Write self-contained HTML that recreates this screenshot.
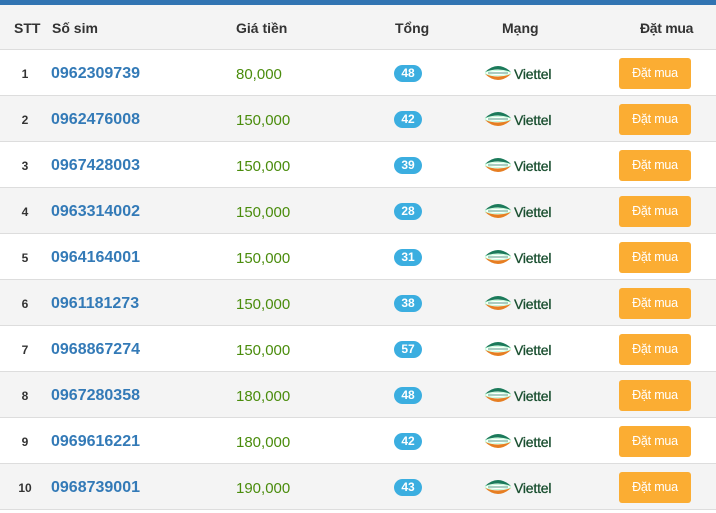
<!DOCTYPE html><html><head><meta charset="utf-8"><style>
body{margin:0;width:716px;height:513px;background:#fff;font-family:"Liberation Sans",Arial,sans-serif;position:relative;overflow:hidden}
.top{position:absolute;left:0;top:0;width:716px;height:5px;background:#3174b2}
.hd{position:absolute;left:0;top:5px;width:716px;height:45px;background:#f4f4f4;border-bottom:1px solid #ddd;box-sizing:border-box;font-weight:bold;font-size:14px;color:#333}
.hd span,.r span{position:absolute}
.r{position:absolute;left:0;width:716px;height:46px;border-bottom:1px solid #ddd;box-sizing:border-box}
.r.a{background:#f4f4f4}
.stt{width:50px;text-align:center;font-size:12px;font-weight:bold;color:#333;top:17px;left:0}
.num{left:51px;top:15px;font-size:16px;font-weight:bold;color:#337ab7}
.pr{left:236px;top:16px;font-size:15px;color:#4a8c0c}
.bd{left:394px;top:15px;width:28px;height:17px;border-radius:9px;background:#3baee0;color:#fff;font-size:12px;font-weight:bold;text-align:center;line-height:17px}
.lg{left:484px;top:13px}
.vt{left:514px;top:16px;font-size:14px;color:#1a4f30;letter-spacing:-0.2px;-webkit-text-stroke:0.3px #1a4f30}
.bt{left:619px;top:8px;width:72px;height:31px;border-radius:3px;background:#fbad33;color:#fff;font-size:12.5px;text-align:center;line-height:31px;letter-spacing:-0.2px}
</style></head><body>
<div class="top"></div>
<div class="hd"><span style="left:14px;top:15px">STT</span><span style="left:52px;top:15px">Số sim</span><span style="left:236px;top:15px">Giá tiền</span><span style="left:395px;top:15px">Tổng</span><span style="left:502px;top:15px">Mạng</span><span style="left:640px;top:15px;letter-spacing:-0.3px">Đặt mua</span></div>
<div id="rows"></div>
<script>
var d=[["0962309739","80,000",48],["0962476008","150,000",42],["0967428003","150,000",39],["0963314002","150,000",28],["0964164001","150,000",31],["0961181273","150,000",38],["0968867274","150,000",57],["0967280358","180,000",48],["0969616221","180,000",42],["0968739001","190,000",43]];
var h="";
var logo='<svg width="28" height="20" viewBox="0 0 28 20"><path d="M1 9 Q14 -3 27 9 Q14 4 1 9Z" fill="#1b7a5a"/><ellipse cx="14" cy="10" rx="13" ry="2.3" fill="#fff" stroke="#7fa" stroke-width="0.4"/><path d="M4 10 H24" stroke="#1b7a5a" stroke-width="0.8"/><path d="M1 11 Q14 23 27 11 Q14 16 1 11Z" fill="#e67e22"/></svg>';
for(var i=0;i<10;i++){h+='<div class="r'+(i%2?' a':'')+'" style="top:'+(50+46*i)+'px"><span class="stt">'+(i+1)+'</span><span class="num">'+d[i][0]+'</span><span class="pr">'+d[i][1]+'</span><span class="bd">'+d[i][2]+'</span><span class="lg">'+logo+'</span><span class="vt">Viettel</span><span class="bt">Đặt mua</span></div>';}
document.getElementById("rows").innerHTML=h;
</script>
</body></html>
